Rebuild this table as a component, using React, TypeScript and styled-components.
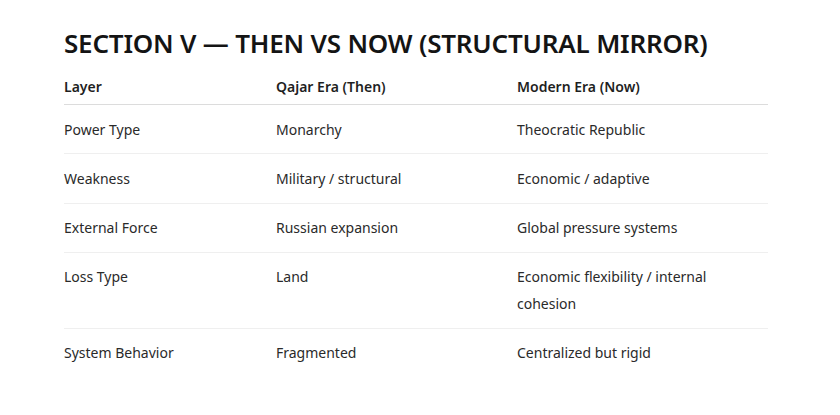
import React from "react";
import styled, { createGlobalStyle } from "styled-components";

const Global = createGlobalStyle`
  html, body { margin: 0; padding: 0; background: #ffffff; }
  body { font-family: "Noto Sans", "Open Sans", sans-serif; color: #1f1f1f; }
`;

const Page = styled.main`
  padding: 26px 72px 0 64px;
  width: 840px;
  box-sizing: border-box;
`;

const Title = styled.h2`
  margin: 0 0 13px;
  font-size: 26px;
  line-height: 34px;
  font-weight: 600;
  color: #141414;
  letter-spacing: -0.2px;
`;

const Table = styled.table`
  width: 704px;
  border-collapse: collapse;
  table-layout: fixed;
`;

const Col = styled.col<{ $w: number }>`
  width: ${(p) => p.$w}px;
`;

const HeadCell = styled.th`
  text-align: left;
  font-size: 14px;
  line-height: 27px;
  font-weight: 600;
  color: #1f1f1f;
  padding: 0 12px 4px 0;
  border-bottom: 1px solid #dcdcdc;
`;

const Row = styled.tr<{ $last?: boolean }>`
  border-bottom: ${(p) => (p.$last ? "none" : "1px solid #efefef")};
`;

const Cell = styled.td`
  font-size: 14px;
  line-height: 26.8px;
  font-weight: 400;
  color: #2a2a2a;
  padding: 11.5px 12px 10px 0;
  vertical-align: top;
`;

const rows = [
  ["Power Type", "Monarchy", "Theocratic Republic"],
  ["Weakness", "Military / structural", "Economic / adaptive"],
  ["External Force", "Russian expansion", "Global pressure systems"],
  ["Loss Type", "Land", "Economic flexibility / internal cohesion"],
  ["System Behavior", "Fragmented", "Centralized but rigid"],
];

export default function App() {
  return (
    <>
      <Global />
      <Page>
        <Title>SECTION V — THEN VS NOW (STRUCTURAL MIRROR)</Title>
        <Table>
          <colgroup>
            <Col $w={212} />
            <Col $w={241} />
            <Col $w={251} />
          </colgroup>
          <thead>
            <tr>
              <HeadCell>Layer</HeadCell>
              <HeadCell>Qajar Era (Then)</HeadCell>
              <HeadCell>Modern Era (Now)</HeadCell>
            </tr>
          </thead>
          <tbody>
            {rows.map((r, i) => (
              <Row key={i} $last={i === rows.length - 1}>
                {r.map((c, j) => (
                  <Cell key={j}>{c}</Cell>
                ))}
              </Row>
            ))}
          </tbody>
        </Table>
      </Page>
    </>
  );
}
